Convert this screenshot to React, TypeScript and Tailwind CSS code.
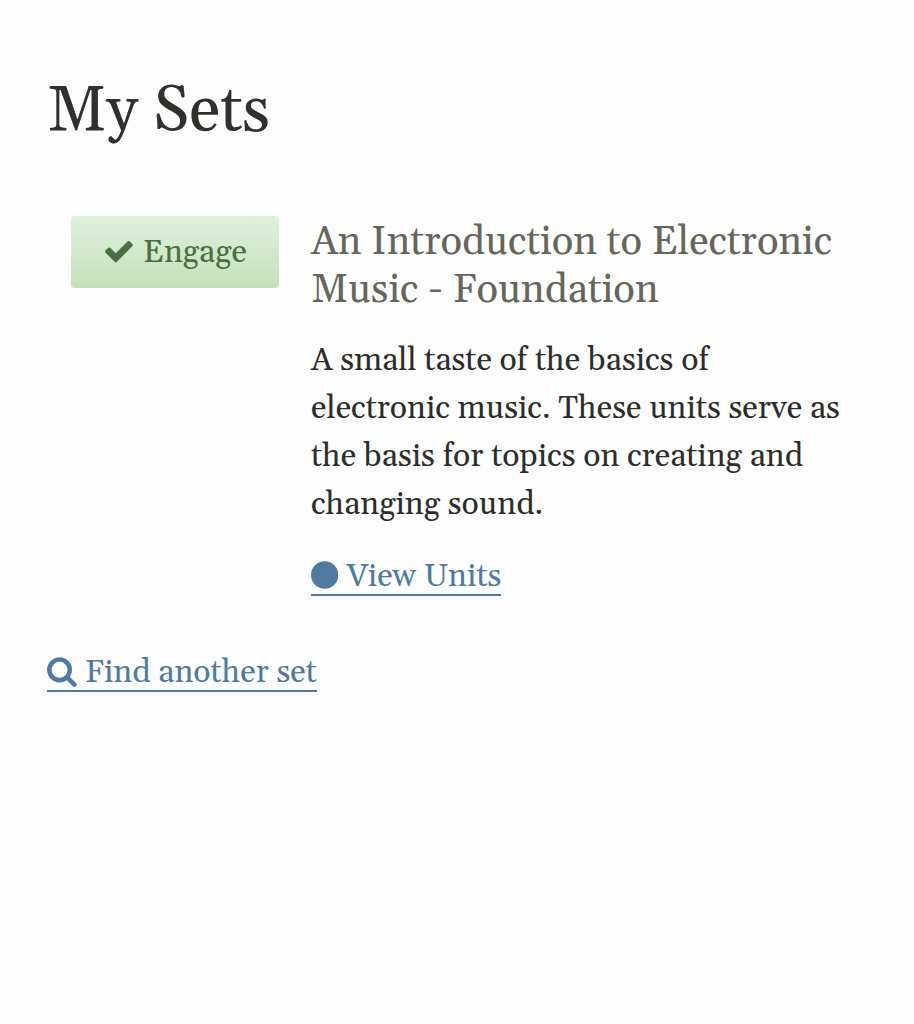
import React from "react";

function CheckIcon() {
  return (
    <svg viewBox="0 0 1792 1792" className="mb-[2px] h-8 w-8 shrink-0 fill-current" aria-hidden="true">
      <path d="M1671 566q0 40-28 68l-724 724-136 136q-28 28-68 28t-68-28l-136-136-362-362q-28-28-28-68t28-68l136-136q28-28 68-28t68 28l294 295 656-657q28-28 68-28t68 28l136 136q28 28 28 68z" />
    </svg>
  );
}

function CircleIcon() {
  return (
    <svg viewBox="128 0 1536 1792" className="h-8 w-[27.43px] shrink-0 fill-current" aria-hidden="true">
      <circle cx="896" cy="896" r="768" />
    </svg>
  );
}

function SearchIcon() {
  return (
    <svg viewBox="64 0 1664 1792" className="h-8 w-[29.72px] shrink-0 fill-current" aria-hidden="true">
      <path d="M1216 832q0-185-131.5-316.5t-316.5-131.5-316.5 131.5-131.5 316.5 131.5 316.5 316.5 131.5 316.5-131.5 131.5-316.5zm512 832q0 52-38 90t-90 38q-54 0-90-38l-343-342q-179 124-399 124-143 0-273.5-55.5t-225-150-150-225-55.5-273.5 55.5-273.5 150-225 225-150 273.5-55.5 273.5 55.5 225 150 150 225 55.5 273.5q0 220-124 399l343 343q37 37 37 90z" />
    </svg>
  );
}

export default function App() {
  return (
    <main className="min-h-screen bg-[#fdfdfd] px-[47px] pt-[76px] font-[Gelasio,Georgia,'Liberation_Serif',serif] text-[32px] leading-[48px] text-[#2d2d2a]">
      <h1 className="text-[64px] leading-[72px] whitespace-nowrap text-[#30302c]">My Sets</h1>

      <section className="mt-[68px] flex items-start gap-8 pl-6">
        <button className="flex h-[72px] w-[208px] shrink-0 items-center gap-2 rounded-[4px] bg-linear-to-b from-[#e0f0dd] to-[#c4e1bb] pl-8 text-[#4a6f41]">
          <CheckIcon />
          <span className="pt-[2px]">Engage</span>
        </button>
        <div className="whitespace-nowrap">
          <h2 className="pt-[3px] text-[40px] leading-[48px] text-[#66665c]">
            An Introduction to Electronic
            <br />
            Music - Foundation
          </h2>
          <p className="mt-[22px]">
            A small taste of the basics of
            <br />
            electronic music. These units serve as
            <br />
            the basis for topics on creating and
            <br />
            changing sound.
          </p>
          <a href="#units" className="mt-[23px] flex h-[44px] w-fit items-center gap-2 border-b-2 border-[#4f7ba0] pt-[3px] text-[#4f7ba0]">
            <CircleIcon />
            <span className="pt-[4px]">View Units</span>
          </a>
        </div>
      </section>

      <a href="#find" className="mt-[52px] flex h-[44px] w-fit items-center gap-2 border-b-2 border-[#4f7ba0] pt-[3px] text-[#4f7ba0]">
        <SearchIcon />
        <span className="pt-[4px]">Find another set</span>
      </a>
    </main>
  );
}
